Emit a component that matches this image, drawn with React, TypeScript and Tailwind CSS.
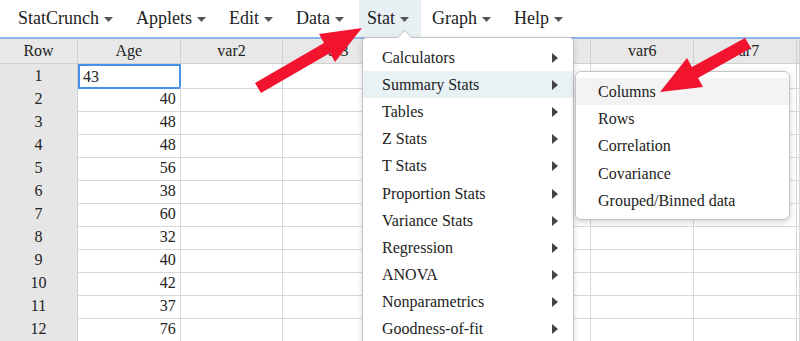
const menus = ["StatCrunch", "Applets", "Edit", "Data", "Stat", "Graph", "Help"];

const statItems = [
  "Calculators",
  "Summary Stats",
  "Tables",
  "Z Stats",
  "T Stats",
  "Proportion Stats",
  "Variance Stats",
  "Regression",
  "ANOVA",
  "Nonparametrics",
  "Goodness-of-fit",
];

const summaryItems = ["Columns", "Rows", "Correlation", "Covariance", "Grouped/Binned data"];

const headers = ["Row", "Age", "var2", "var3", "", "", "var6", "var7", ""];
const ages = ["43", "40", "48", "48", "56", "38", "60", "32", "40", "42", "37", "76", ""];

const gridCols = "grid grid-cols-[78px_repeat(7,102.7px)_1fr]";

function Caret() {
  return (
    <svg width="9" height="5" viewBox="0 0 9 5" className="mt-[1px]">
      <path d="M0 0h9L4.5 5z" fill="#555" />
    </svg>
  );
}

function RightTri() {
  return (
    <svg width="6" height="10" viewBox="0 0 6 10">
      <path d="M0 0L6 5L0 10z" fill="#444" />
    </svg>
  );
}

export default function App() {
  return (
    <div className="relative h-[341px] w-[800px] overflow-hidden bg-white font-['Liberation_Serif','Times_New_Roman',serif] text-[#222]">
      {/* menu bar */}
      <div className="flex h-[37px] items-stretch gap-[3px] pl-[10px] text-[18px]">
        {menus.map((m) => (
          <div
            key={m}
            className={`flex items-center gap-[5px] pl-[8px] pr-[12px] ${m === "Stat" ? "bg-[#e7f0f3]" : ""}`}
          >
            <span>{m}</span>
            <Caret />
          </div>
        ))}
      </div>
      <div className="h-[2px] bg-[#8db5e8]" />

      {/* spreadsheet */}
      <div className="text-[16px]">
        <div className={`${gridCols} h-[25px] bg-[#e8e8e8]`}>
          {headers.map((h, i) => (
            <div
              key={i}
              className="flex items-center justify-center border-r border-b border-[#d0d0d0]"
            >
              {h}
            </div>
          ))}
        </div>
        {ages.map((a, r) => (
          <div key={r} className={`${gridCols} h-[23px]`}>
            <div className="flex items-center justify-center border-r border-b border-[#d0d0d0] bg-[#e6e6e6]">
              {r < 12 ? r + 1 : ""}
            </div>
            {r === 0 ? (
              <div className="flex items-center pl-[5px] shadow-[inset_0_0_0_2px_#4a8fe7]">{a}</div>
            ) : (
              <div className="flex items-center justify-end border-r border-b border-[#d8d8d8] pr-[4px]">
                {a}
              </div>
            )}
            {[0, 1, 2, 3, 4, 5, 6].map((c) => (
              <div key={c} className="border-r border-b border-[#d8d8d8]" />
            ))}
          </div>
        ))}
      </div>

      {/* Stat dropdown */}
      <div className="absolute left-[362px] top-[37px] h-[320px] w-[212px] rounded-[5px] border border-[#c4c4c4] bg-white pt-[6px] text-[16px] shadow-[0_2px_6px_rgba(0,0,0,0.15)]">
        {statItems.map((s) => (
          <div
            key={s}
            className={`flex h-[27.2px] items-center justify-between pl-[19px] pr-[15px] ${s === "Summary Stats" ? "bg-[#e8f1f4]" : ""}`}
          >
            <span>{s}</span>
            <RightTri />
          </div>
        ))}
      </div>
      <div className="absolute left-[399px] top-[32px] h-[11px] w-[11px] rotate-45 border-l border-t border-[#c4c4c4] bg-white" />

      {/* Summary Stats submenu */}
      <div className="absolute left-[575px] top-[71px] w-[215px] rounded-[6px] border border-[#c4c4c4] bg-white pt-[6px] pb-[5px] text-[16px] shadow-[0_2px_6px_rgba(0,0,0,0.18)]">
        {summaryItems.map((s) => (
          <div
            key={s}
            className={`flex h-[27.3px] items-center pl-[22px] ${s === "Columns" ? "bg-[#f3f3f3]" : ""}`}
          >
            {s}
          </div>
        ))}
      </div>

      {/* red arrows */}
      <svg className="pointer-events-none absolute left-0 top-0" width="800" height="341">
        <polygon
          points="261,93 255,83 324,43 319,34 362,28 335,62 330,53"
          fill="#f2132f"
        />
        <polygon
          points="751,48 745,38 692,67 687,58 660,92 703,87 698,78"
          fill="#f2132f"
        />
      </svg>
    </div>
  );
}
